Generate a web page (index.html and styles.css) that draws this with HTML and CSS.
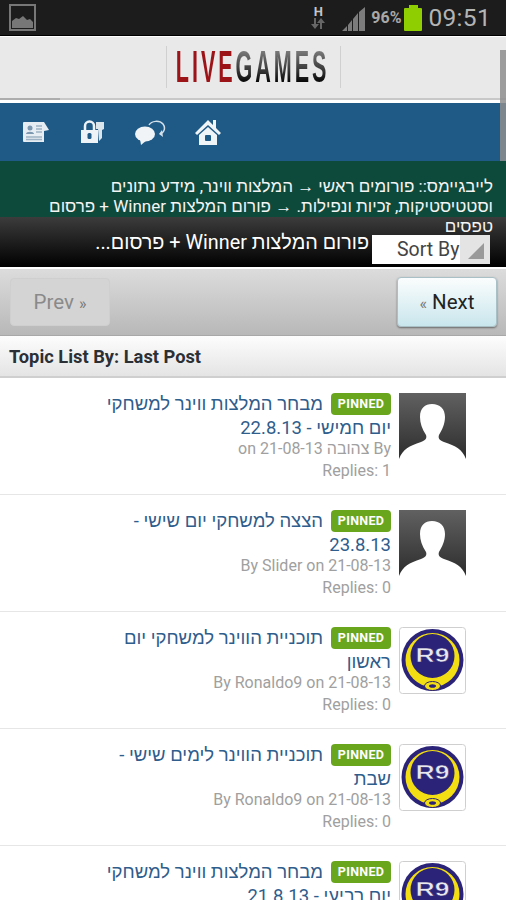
FILE: index.html
```html
<!DOCTYPE html>
<html lang="en">
<head>
  <meta charset="UTF-8">
  <meta name="viewport" content="width=device-width, initial-scale=1.0">
  <title>LiveGames - Topic List</title>
  <link rel="stylesheet" href="styles.css">
</head>
<body>
  <!-- Android status bar -->
  <div class="status-bar">
    <svg class="status-picture" width="28" height="28" viewBox="0 0 28 28">
      <rect x="1" y="1" width="25" height="25" fill="none" stroke="#777" stroke-width="2"/>
      <path d="M3 24V17l4-3 3 1 4-3 4 4 3-1 3 3v6z" fill="#777"/>
    </svg>
    <div class="status-right">
      <div class="status-net">
        <span class="net-h">H</span>
        <svg width="16" height="11" viewBox="0 0 16 11">
          <path d="M4 11V5H1l4-5 4 5H6v6zM12 0v6h3l-4 5-4-5h3V0z" fill="#666" transform="matrix(-1 0 0 1 16 0)"/>
        </svg>
      </div>
      <svg class="status-signal" width="24" height="24" viewBox="0 0 24 24">
        <path d="M0 24l5-5v5zM6 18l4-5v11H6zM11 12l5-6v18h-5zM17 5l6-5v24h-6z" fill="#7c7c7c"/>
      </svg>
      <span class="status-pct">96%</span>
      <div class="battery"><div class="battery-cap"></div><div class="battery-body"></div></div>
      <span class="status-time">09:51</span>
    </div>
  </div>

  <div class="scrollbar"></div>

  <!-- Logo -->
  <div class="site-header">
    <div class="logo"><span class="logo-text"><span class="logo-live">LIVE</span><span class="logo-games">GAMES</span></span></div>
  </div>
  <div class="header-line"><div class="header-line-thumb"></div></div>

  <!-- Icon bar -->
  <div class="icon-bar">
    <svg width="28" height="24" viewBox="0 0 28 24">
      <path d="M2 2h20l5 8-5 1v11H2a1 1 0 0 1-1-1V3a1 1 0 0 1 1-1z" fill="#e6edf3"/>
      <circle cx="8" cy="8" r="2.5" fill="#7b98b0"/>
      <path d="M4 14c0-3 8-3 8 0z" fill="#7b98b0"/>
      <path d="M14 6h6M14 9h6M14 12h6M4 17h16M4 19.500h16" stroke="#9db2c4" stroke-width="1.300"/>
    </svg>
    <svg width="28" height="24" viewBox="0 0 28 24">
      <path d="M3 10h17v13H3z" fill="#eef3f7"/>
      <path d="M7 10V6a4.500 4.500 0 0 1 9 0v4" fill="none" stroke="#eef3f7" stroke-width="2.500"/>
      <rect x="9.500" y="13" width="4" height="6" rx="1.500" fill="#1f5a87"/>
      <path d="M18 2h8v7l-2 1v8l-3 3-1-12h-2z" fill="#dbe5ec"/>
    </svg>
    <svg width="32" height="26" viewBox="0 0 32 26">
      <ellipse cx="11" cy="15" rx="10" ry="7.500" fill="#f0f4f7"/>
      <path d="M6 20l1 6 6-5z" fill="#f0f4f7"/>
      <path d="M15 6a8 6 0 0 1 14-1c3 4 1 9-3 10" fill="none" stroke="#d5e1ea" stroke-width="1.500"/>
      <path d="M28 11l-3 4 4 3z" fill="#d5e1ea"/>
    </svg>
    <svg width="28" height="28" viewBox="0 0 28 28">
      <path d="M14 2L1 15l2 2L14 7l11 10 2-2-5-5V2h-3v5z" fill="#f0f4f7"/>
      <path d="M5 17l9-8 9 8v10H5z" fill="#f0f4f7"/>
      <rect x="11" y="17" width="6" height="6" rx="1" fill="#1f5a87"/>
    </svg>
  </div>

  <!-- Breadcrumb (third line runs over the title bar) -->
  <div class="breadcrumb" dir="rtl">לייבגיימס:: פורומים ראשי → המלצות ווינר, מידע נתונים וסטטיסטיקות, זכיות ונפילות. → פורום המלצות Winner + פרסום טפסים</div>

  <div class="title-bar">
    <div class="sort-box">
      <span class="sort-label">Sort By</span>
      <span class="sort-arrow"><span class="sort-tri"></span></span>
    </div>
    <div class="title-text" dir="rtl">פורום המלצות Winner + פרסום...</div>
  </div>

  <!-- Prev / Next -->
  <div class="pager">
    <a class="pager-btn pager-prev" href="#">Prev <span class="pager-mark">»</span></a>
    <a class="pager-btn pager-next" href="#"><span class="pager-mark">«</span> Next</a>
  </div>

  <div class="list-head">Topic List By: Last Post</div>

  <svg class="svg-defs" width="0" height="0">
    <defs>
      <linearGradient id="avatarBg" x1="0" y1="0" x2="0" y2="1">
        <stop offset="0" stop-color="#616161"/>
        <stop offset="1" stop-color="#2c2c2c"/>
      </linearGradient>
      <symbol id="avatar" viewBox="0 0 67 67">
        <rect width="67" height="67" fill="url(#avatarBg)"/>
        <path d="M0 66C4 56 10 53 22 49C27 47 28 45 27 42C23 36 21 30 21 24C21 15 26 11 33 11C41 11 46 16 46 24C46 31 43 37 40 42C39 45 40 47 45 49C57 53 63 56 67 66V67H0z" fill="#fff"/>
      </symbol>
      <symbol id="r9" viewBox="0 0 67 67">
        <rect x="0.500" y="0.500" width="66" height="66" rx="3" fill="#fff" stroke="#cfcfcf"/>
        <circle cx="33.500" cy="33" r="31" fill="#2a2378"/>
        <path fill-rule="evenodd" d="M6.500 33a27 27 0 1 0 54 0a27 27 0 1 0-54 0zM11.500 29a22 22 0 1 1 44 0a22 22 0 1 1-44 0z" fill="#f2de12"/>
        <ellipse cx="33.500" cy="59" rx="8" ry="4.500" fill="#f2de12" stroke="#2a2378"/>
        <ellipse cx="33.500" cy="59" rx="3.500" ry="1.800" fill="#2a2378"/>
        <text x="33.500" y="35" text-anchor="middle" textLength="34" lengthAdjust="spacingAndGlyphs" class="r9-text">R9</text>
      </symbol>
    </defs>
  </svg>

  <!-- Topics -->
  <div class="topics" dir="rtl">
    <div class="topic">
      <svg class="topic-pic"><use href="#avatar"/></svg>
      <div class="topic-body">
        <div class="topic-title"><span class="pinned">PINNED</span><a href="#">מבחר המלצות ווינר למשחקי יום חמישי - 22.8.13</a></div>
        <div class="topic-meta">By צהובה on 21-08-13</div>
        <div class="topic-meta">Replies: 1</div>
      </div>
    </div>
    <div class="topic">
      <svg class="topic-pic"><use href="#avatar"/></svg>
      <div class="topic-body">
        <div class="topic-title"><span class="pinned">PINNED</span><a href="#">הצצה למשחקי יום שישי - 23.8.13</a></div>
        <div class="topic-meta">By Slider on 21-08-13</div>
        <div class="topic-meta">Replies: 0</div>
      </div>
    </div>
    <div class="topic">
      <svg class="topic-pic"><use href="#r9"/></svg>
      <div class="topic-body">
        <div class="topic-title"><span class="pinned">PINNED</span><a href="#">תוכניית הווינר למשחקי יום ראשון</a></div>
        <div class="topic-meta">By Ronaldo9 on 21-08-13</div>
        <div class="topic-meta">Replies: 0</div>
      </div>
    </div>
    <div class="topic">
      <svg class="topic-pic"><use href="#r9"/></svg>
      <div class="topic-body">
        <div class="topic-title"><span class="pinned">PINNED</span><a href="#">תוכניית הווינר לימים שישי - שבת</a></div>
        <div class="topic-meta">By Ronaldo9 on 21-08-13</div>
        <div class="topic-meta">Replies: 0</div>
      </div>
    </div>
    <div class="topic">
      <svg class="topic-pic"><use href="#r9"/></svg>
      <div class="topic-body">
        <div class="topic-title"><span class="pinned">PINNED</span><a href="#">מבחר המלצות ווינר למשחקי יום רביעי - 21.8.13</a></div>
      </div>
    </div>
  </div>
</body>
</html>
```

FILE: styles.css
```css
/* General */
html, body {
  margin: 0;
  padding: 0;
  height: 900px;
  overflow: hidden;
}

body {
  position: relative;
  font-family: Roboto, "Liberation Sans", sans-serif;
  background-color: #fff;
}

a {
  text-decoration: none;
}

.svg-defs {
  display: block;
  height: 0;
}

/* Status bar */
.status-bar {
  height: 35px;
  background-color: #1c1c1c;
  border-bottom: 1px solid #000;
  display: flex;
  justify-content: space-between;
  align-items: center;
  padding: 0 15px 0 9px;
}

.status-picture {
  display: block;
}

.status-right {
  display: flex;
  align-items: center;
}

.status-net {
  display: flex;
  flex-direction: column;
  align-items: center;
  margin-right: 16px;
  width: 16px;
}

.net-h {
  font-size: 13px;
  font-weight: bold;
  line-height: 12px;
  color: #c4c4c4;
}

.status-signal {
  margin-right: 5px;
  margin-top: 2px;
}

.status-pct {
  font-size: 16px;
  font-weight: bold;
  color: #a8a8a8;
  margin-right: 3px;
}

.battery {
  display: flex;
  flex-direction: column;
  align-items: center;
  margin-right: 6px;
}

.battery-cap {
  width: 9px;
  height: 3px;
  background-color: #8fce00;
}

.battery-body {
  width: 18px;
  height: 23px;
  background-color: #8fce00;
  border-radius: 1px;
}

.status-time {
  font-size: 24.500px;
  color: #b4b4b4;
  letter-spacing: 0.3px;
}

/* Overlay scrollbar */
.scrollbar {
  position: absolute;
  top: 50px;
  right: 0;
  width: 6px;
  height: 153px;
  background-color: #8e8e8e;
  opacity: 0.85;
}

/* Logo */
.site-header {
  height: 52px;
  background-color: #e9e9e9;
  border-top: 1px solid #fff;
  display: flex;
  justify-content: center;
  padding-top: 9px;
}

.logo {
  width: 173px;
  height: 42px;
  border-left: 1px solid #d0d0d0;
  border-right: 1px solid #d0d0d0;
  display: flex;
  justify-content: center;
  align-items: center;
}

.logo-text {
  font-family: "Liberation Sans", sans-serif;
  font-size: 44px;
  font-weight: bold;
  letter-spacing: 6px;
  transform: scaleX(0.49);
  white-space: nowrap;
}

.logo-live {
  color: #9c1418;
}

.logo-games {
  background: linear-gradient(#777 20%, #333 60%, #000 85%);
  -webkit-background-clip: text;
  background-clip: text;
  color: transparent;
}

.header-line {
  height: 5px;
  background-color: #fff;
  border-top: 2px solid #c8c8c8;
  box-sizing: border-box;
}

.header-line-thumb {
  width: 60px;
  height: 2px;
  margin-top: -2px;
  background-color: #adadad;
}

/* Icon bar */
.icon-bar {
  height: 58px;
  background-color: #1f5a87;
  display: flex;
  align-items: center;
  gap: 28px;
  padding-left: 22px;
}

/* Breadcrumb */
.breadcrumb {
  position: relative;
  height: 41px;
  padding: 15px 13px 0 45px;
  background-color: #0e4a3c;
  color: #f4f4f4;
  font-size: 17px;
  line-height: 20px;
}

/* Title bar */
.title-bar {
  height: 50px;
  background: linear-gradient(#3c3c3c, #000);
  border-bottom: 2px solid #fff;
  display: flex;
  flex-direction: row-reverse;
  padding-right: 16px;
  gap: 3px;
}

.title-text {
  position: relative;
  margin-top: 14px;
  width: 280px;
  font-size: 19.800px;
  line-height: 24px;
  color: #fff;
  white-space: nowrap;
  overflow: hidden;
  text-align: right;
}

.sort-box {
  position: relative;
  width: 118px;
  height: 29px;
  margin-top: 18px;
  background-color: #fff;
  display: flex;
  justify-content: space-between;
  align-items: center;
}

.sort-label {
  font-size: 19.500px;
  color: #444;
  padding-left: 25px;
}

.sort-arrow {
  width: 30px;
  height: 29px;
  background-color: #e4e4e4;
  position: relative;
}

.sort-tri {
  position: absolute;
  right: 6px;
  bottom: 5px;
  width: 0;
  height: 0;
  border-left: 16px solid transparent;
  border-bottom: 16px solid #9a9a9a;
}

/* Prev / Next */
.pager {
  height: 66px;
  background: linear-gradient(#dcdcdc, #b8b8b8);
  border-bottom: 1px solid #a8a8a8;
  display: flex;
  justify-content: space-between;
  align-items: center;
  padding: 0 9px 0 10px;
}

.pager-btn {
  width: 100px;
  box-sizing: border-box;
  border-radius: 4px;
  text-align: center;
  font-size: 20.500px;
}

.pager-prev {
  height: 48px;
  line-height: 46px;
  color: #8a8a8a;
  background-color: #d4d4d4;
  border: 1px solid #cfcfcf;
}

.pager-next {
  height: 50px;
  line-height: 48px;
  color: #222;
  background: linear-gradient(#fbfdfd, #c9e6ed);
  border: 1px solid #a9c0c6;
  box-shadow: 0 1px 2px rgba(0, 0, 0, 0.45);
}

.pager-mark {
  color: #777;
  font-size: 16px;
}

.list-head {
  height: 42px;
  box-sizing: border-box;
  padding: 10px 9px 0;
  font-size: 18.300px;
  font-weight: bold;
  color: #2b2f36;
  background: linear-gradient(#fdfdfd, #e4e4e4);
  border-bottom: 2px solid #cfcfcf;
}

/* Topics */
.topic {
  height: 117px;
  box-sizing: border-box;
  border-bottom: 1px solid #e6e6e6;
  padding: 15px 40px 0 0;
  display: flex;
}

.topic-pic {
  width: 67px;
  height: 67px;
  flex: none;
  margin-left: 8px;
}

.r9-text {
  font-family: "Liberation Sans", sans-serif;
  font-size: 20px;
  font-weight: bold;
  fill: #e8e8ee;
  stroke: #2a2378;
  stroke-width: 0.5px;
}

.topic-body {
  width: 292px;
  margin-top: -1px;
}

.topic-title {
  font-size: 18.500px;
  line-height: 24px;
  margin-bottom: -2px;
}

.topic-title a {
  color: #2f5d8c;
}

.pinned {
  display: inline-block;
  vertical-align: top;
  width: 60px;
  height: 22px;
  margin: 1px 0 0 8px;
  border-radius: 4px;
  background-color: #6aa51e;
  color: #fff;
  font-size: 12.500px;
  font-weight: bold;
  line-height: 22px;
  text-align: center;
  letter-spacing: 0.3px;
}

.topic-meta {
  font-size: 16px;
  line-height: 22px;
  color: #a0a0a0;
}
```
